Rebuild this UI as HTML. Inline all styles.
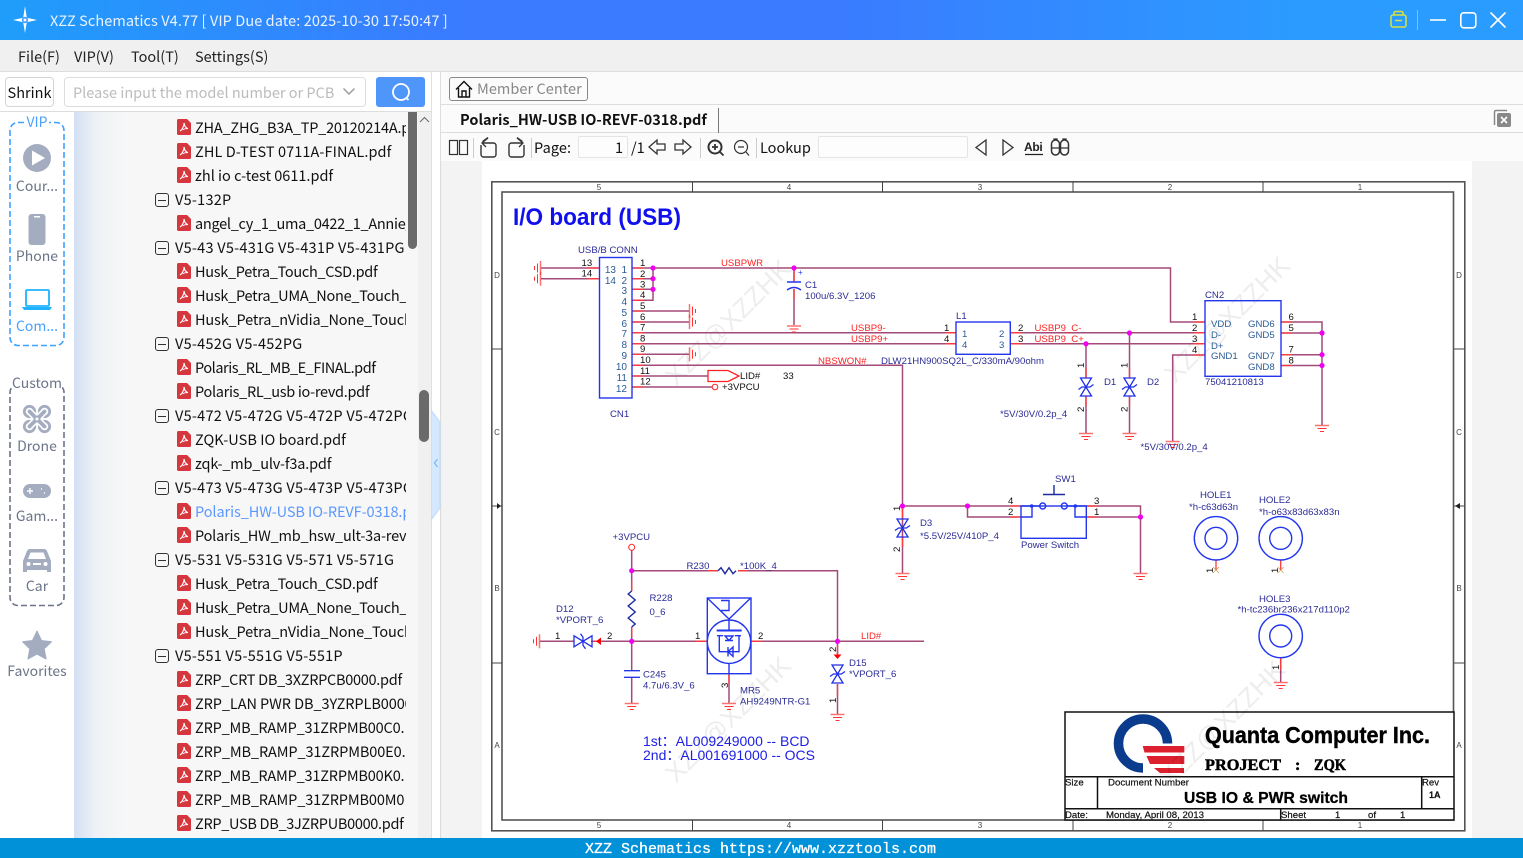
<!DOCTYPE html>
<html><head><meta charset="utf-8"><title>XZZ Schematics</title>
<style>
*{box-sizing:border-box}
html,body{margin:0;padding:0;width:1523px;height:858px;overflow:hidden;background:#f0f0f0;font-family:"Noto Sans CJK SC","Liberation Sans",sans-serif;color:#111}
.a{position:absolute;white-space:nowrap}
#title{left:0;top:0;width:1523px;height:40px;background:linear-gradient(90deg,#1f9dfb 0,#3a7bff 30%,#3a7bff 55%,#2b9bff 85%,#2b9cff 100%)}
#menu{left:0;top:40px;width:1523px;height:32px;background:#f0f0f0;border-bottom:1px solid #ddd}
.m{top:47px;font-size:14.5px;line-height:20px;color:#222}
#tree{left:74px;top:112px;width:344px;height:726px;background:linear-gradient(90deg,#d3e0f3 0,#eef1f6 22px,#f7f7f7 50px);overflow:hidden}
.r{position:absolute;left:0;width:332px;height:24px;line-height:24px;font-size:14.5px;overflow:hidden;white-space:nowrap;color:#111}
.r span{position:absolute;top:0}
.f span{left:121px}
.g span{left:101px;letter-spacing:.25px}
.f svg{position:absolute;left:103px;top:3px}
.g i{position:absolute;left:81px;top:5px;width:14px;height:14px;border:1px solid #333;border-radius:3px}
.g i:after{content:"";position:absolute;left:2px;top:5.5px;width:8px;height:1px;background:#333}
.s{left:0;width:74px;text-align:center;font-size:14px;line-height:18px;color:#6b7488}
</style></head><body>
<svg width="0" height="0" style="position:absolute"><defs>
<g id="pdf"><path d="M0 1.500a1.500 1.500 0 0 1 1.500-1.500H10l4 4v10.500a1.500 1.500 0 0 1-1.500 1.500h-11A1.500 1.500 0 0 1 0 14.500z" fill="#d6373f"/><path d="M3 12c2-1 3-3 4-6.500-.6-1.500.6-1.500.4 0 .4 2 1.500 3.500 3.600 4-2 0-4 .4-5.400 1.300" fill="none" stroke="#fff" stroke-width="1.100"/></g>
</defs></svg>

<div class="a" id="title"></div>
<svg class="a" style="left:0;top:0" width="60" height="40"><path d="M25 6L26.800 17.800 37 20 26.800 22.200 25 33 23.200 22.200 13 20 23.200 17.800z" fill="#fff"/><circle cx="25" cy="20" r="3.200" fill="#4aa3ff"/><circle cx="25" cy="20" r="1.400" fill="#fff"/></svg>
<div class="a" style="left:50px;top:11px;font-size:14.5px;line-height:20px;letter-spacing:.09px;color:#eaf3ff">XZZ Schematics V4.77 [ VIP Due date: 2025-10-30 17:50:47 ]</div>
<svg class="a" style="left:1380px;top:0" width="143" height="40" fill="none">
<g stroke="#d8e23c" stroke-width="1.500"><rect x="11" y="15" width="15" height="12" rx="2"/><path d="M14 15v-2a1.500 1.500 0 0 1 1.500-1.500h6A1.500 1.500 0 0 1 23 13v2M15 20.500h7"/></g>
<path d="M37.500 10v20" stroke="#7cc0ff"/>
<g stroke="#fff" stroke-width="1.600"><path d="M50 20h16"/><rect x="80.800" y="12.800" width="15" height="15" rx="3"/><path d="M110.500 12.500l15 15M125.500 12.500l-15 15"/></g></svg>

<div class="a" id="menu"></div>
<div class="a m" style="left:18px">File(F)</div><div class="a m" style="left:74px">VIP(V)</div><div class="a m" style="left:131px">Tool(T)</div><div class="a m" style="left:195px">Settings(S)</div>

<div class="a" style="left:0;top:72px;width:431px;height:40px;background:#fff;border-bottom:1px solid #ddd"></div>
<div class="a" style="left:5px;top:77px;width:49px;height:30px;border:1px solid #d5d5d5;border-radius:4px;background:#fff;text-align:center;font-size:14.500px;line-height:29px">Shrink</div>
<div class="a" style="left:64px;top:77px;width:302px;height:30px;border:1px solid #ddd;border-radius:4px;background:#fff;padding-left:8px;font-size:14.500px;line-height:29px;color:#bcbcbc">Please input the model number or PCB</div>
<svg class="a" style="left:342px;top:87px" width="14" height="10" fill="none"><path d="M1.500 1.500L7 7l5.500-5.500" stroke="#999" stroke-width="1.400"/></svg>
<div class="a" style="left:376px;top:77px;width:49px;height:30px;border-radius:3px;background:#4f96fb"></div>
<svg class="a" style="left:389px;top:80px" width="24" height="24" fill="none"><circle cx="12" cy="12" r="8" stroke="#fff" stroke-width="1.800"/><path d="M17.500 18l2 2" stroke="#fff" stroke-width="1.800"/></svg>

<div class="a" style="left:0;top:112px;width:74px;height:726px;background:#fff"></div>
<svg class="a" style="left:0;top:112px" width="74" height="510" fill="none"><rect x="10" y="10.500" width="54" height="223" rx="8" stroke="#3ea2ff" stroke-width="1.600" stroke-dasharray="6 3"/><rect x="10" y="272.500" width="54" height="221" rx="8" stroke="#6b7488" stroke-width="1.600" stroke-dasharray="6 3"/></svg>
<div class="a s" style="top:113px;color:#4a9fff"><span style="background:#fff;padding:0 1px">VIP</span></div>
<div class="a s" style="top:374px"><span style="background:#fff">Custom</span></div>
<div class="a s" style="top:177px">Cour...</div><div class="a s" style="top:247px">Phone</div><div class="a s" style="top:317px;color:#4a9fff">Com...</div>
<div class="a s" style="top:437px">Drone</div><div class="a s" style="top:507px">Gam...</div><div class="a s" style="top:577px">Car</div><div class="a s" style="top:662px">Favorites</div>
<svg class="a" style="left:0;top:112px" width="74" height="560">
<circle cx="37" cy="46" r="14" fill="#a4adc0"/><path d="M32 38.500l13 7.500-13 7.500z" fill="#fff"/>
<rect x="28.500" y="102" width="17" height="31" rx="3" fill="#a4adc0"/><rect x="34" y="104" width="6" height="1.500" fill="#fff"/>
<g fill="none" stroke="#1fb2ff" stroke-width="1.800"><rect x="26" y="178" width="23" height="16" rx="1"/></g><path d="M22 195h30l-2 3H24z" fill="#1fb2ff"/>
<g fill="none"><g stroke="#a4adc0" stroke-width="2.800"><circle cx="29.500" cy="299.500" r="5.200"/><circle cx="44.500" cy="299.500" r="5.200"/><circle cx="29.500" cy="314.500" r="5.200"/><circle cx="44.500" cy="314.500" r="5.200"/></g><path d="M29.500 299.500l15 15M44.500 299.500l-15 15" stroke="#fff" stroke-width="7"/><path d="M29.500 299.500l15 15M44.500 299.500l-15 15" stroke="#a4adc0" stroke-width="3.800" stroke-linecap="round"/></g><circle cx="37" cy="307" r="3.500" fill="#a4adc0"/><circle cx="37" cy="307" r="1.500" fill="#fff"/>
<rect x="23" y="372" width="28" height="14" rx="7" fill="#a4adc0"/><path d="M27 379h6M30 376v6M41 377h1M44 381h1" stroke="#fff" stroke-width="1.400"/>
<path d="M23 449l4-10q1-2 3-2h14q2 0 3 2l4 10v11h-4v-2H27v2h-4z" fill="#a4adc0"/><path d="M28 447l2.500-6.500h13L46 447z" fill="#fff"/><circle cx="28.500" cy="452" r="2" fill="#fff"/><circle cx="45.500" cy="452" r="2" fill="#fff"/><rect x="33" y="451" width="8" height="2" fill="#fff"/>
<path d="M37 519l4.500 9.500 10 1.300-7.300 7 1.900 10.200-9.100-5-9.100 5 1.900-10.200-7.300-7 10-1.300z" fill="#a4adc0" stroke="#a4adc0" stroke-linejoin="round"/>
</svg>

<div class="a" id="tree">
<div class="r f" style="top:4px"><svg width="14" height="16"><use href="#pdf"/></svg><span style="letter-spacing:-.2px">ZHA_ZHG_B3A_TP_20120214A.pdf</span></div>
<div class="r f" style="top:28px"><svg width="14" height="16"><use href="#pdf"/></svg><span style="letter-spacing:.08px">ZHL D-TEST 0711A-FINAL.pdf</span></div>
<div class="r f" style="top:52px"><svg width="14" height="16"><use href="#pdf"/></svg><span>zhl io c-test 0611.pdf</span></div>
<div class="r g" style="top:76px"><i></i><span>V5-132P</span></div>
<div class="r f" style="top:100px"><svg width="14" height="16"><use href="#pdf"/></svg><span style="letter-spacing:-.28px">angel_cy_1_uma_0422_1_Annie_</span></div>
<div class="r g" style="top:124px"><i></i><span>V5-43 V5-431G V5-431P V5-431PG</span></div>
<div class="r f" style="top:148px"><svg width="14" height="16"><use href="#pdf"/></svg><span style="letter-spacing:-.3px">Husk_Petra_Touch_CSD.pdf</span></div>
<div class="r f" style="top:172px"><svg width="14" height="16"><use href="#pdf"/></svg><span style="letter-spacing:-.25px">Husk_Petra_UMA_None_Touch_</span></div>
<div class="r f" style="top:196px"><svg width="14" height="16"><use href="#pdf"/></svg><span style="letter-spacing:-.15px">Husk_Petra_nVidia_None_Touch</span></div>
<div class="r g" style="top:220px"><i></i><span>V5-452G V5-452PG</span></div>
<div class="r f" style="top:244px"><svg width="14" height="16"><use href="#pdf"/></svg><span style="letter-spacing:-.45px">Polaris_RL_MB_E_FINAL.pdf</span></div>
<div class="r f" style="top:268px"><svg width="14" height="16"><use href="#pdf"/></svg><span style="letter-spacing:-.3px">Polaris_RL_usb io-revd.pdf</span></div>
<div class="r g" style="top:292px"><i></i><span>V5-472 V5-472G V5-472P V5-472PG</span></div>
<div class="r f" style="top:316px"><svg width="14" height="16"><use href="#pdf"/></svg><span style="letter-spacing:.05px">ZQK-USB IO board.pdf</span></div>
<div class="r f" style="top:340px"><svg width="14" height="16"><use href="#pdf"/></svg><span style="letter-spacing:-.18px">zqk-_mb_ulv-f3a.pdf</span></div>
<div class="r g" style="top:364px"><i></i><span>V5-473 V5-473G V5-473P V5-473PG</span></div>
<div class="r f" style="top:388px"><svg width="14" height="16"><use href="#pdf"/></svg><span style="color:#5b97ff;letter-spacing:-.08px">Polaris_HW-USB IO-REVF-0318.pdf</span></div>
<div class="r f" style="top:412px"><svg width="14" height="16"><use href="#pdf"/></svg><span style="letter-spacing:-.2px">Polaris_HW_mb_hsw_ult-3a-revd</span></div>
<div class="r g" style="top:436px"><i></i><span>V5-531 V5-531G V5-571 V5-571G</span></div>
<div class="r f" style="top:460px"><svg width="14" height="16"><use href="#pdf"/></svg><span style="letter-spacing:-.3px">Husk_Petra_Touch_CSD.pdf</span></div>
<div class="r f" style="top:484px"><svg width="14" height="16"><use href="#pdf"/></svg><span style="letter-spacing:-.25px">Husk_Petra_UMA_None_Touch_</span></div>
<div class="r f" style="top:508px"><svg width="14" height="16"><use href="#pdf"/></svg><span style="letter-spacing:-.15px">Husk_Petra_nVidia_None_Touch</span></div>
<div class="r g" style="top:532px"><i></i><span>V5-551 V5-551G V5-551P</span></div>
<div class="r f" style="top:556px"><svg width="14" height="16"><use href="#pdf"/></svg><span style="letter-spacing:-.28px">ZRP_CRT DB_3XZRPCB0000.pdf</span></div>
<div class="r f" style="top:580px"><svg width="14" height="16"><use href="#pdf"/></svg><span style="letter-spacing:-.08px">ZRP_LAN PWR DB_3YZRPLB0000</span></div>
<div class="r f" style="top:604px"><svg width="14" height="16"><use href="#pdf"/></svg><span style="letter-spacing:-.18px">ZRP_MB_RAMP_31ZRPMB00C0.</span></div>
<div class="r f" style="top:628px"><svg width="14" height="16"><use href="#pdf"/></svg><span style="letter-spacing:-.1px">ZRP_MB_RAMP_31ZRPMB00E0.</span></div>
<div class="r f" style="top:652px"><svg width="14" height="16"><use href="#pdf"/></svg><span style="letter-spacing:-.18px">ZRP_MB_RAMP_31ZRPMB00K0.</span></div>
<div class="r f" style="top:676px"><svg width="14" height="16"><use href="#pdf"/></svg><span style="letter-spacing:-.12px">ZRP_MB_RAMP_31ZRPMB00M0</span></div>
<div class="r f" style="top:700px"><svg width="14" height="16"><use href="#pdf"/></svg><span style="letter-spacing:-.3px">ZRP_USB DB_3JZRPUB0000.pdf</span></div>
</div>
<div class="a" style="left:408px;top:112px;width:9px;height:137px;background:#6a6a6a;border-radius:0 0 5px 5px"></div>
<div class="a" style="left:418px;top:112px;width:13px;height:726px;background:#f0f0f0"></div>
<div class="a" style="left:431px;top:72px;width:10px;height:766px;background:#fff;border-left:1px solid #e0e0e0;border-right:1px solid #ddd"></div>
<svg class="a" style="left:419px;top:116px" width="11" height="8" fill="none"><path d="M1 6l4.500-4.500L10 6" stroke="#666"/></svg>
<div class="a" style="left:419px;top:390px;width:10px;height:52px;background:#6a6a6a;border-radius:5px"></div>
<svg class="a" style="left:431px;top:405px" width="10" height="120"><path d="M0 5l9 12v86l-9 12z" fill="#d4e8ff" stroke="#bcd9fb"/><path d="M6.500 54l-3 4 3 4" stroke="#6aa8f5" fill="none"/></svg>

<div class="a" style="left:441px;top:72px;width:1082px;height:33px;background:#fbfbfb;border-bottom:1px solid #ddd"></div>
<div class="a" style="left:449px;top:77px;width:139px;height:24px;border:1px solid #888;border-radius:3px"></div>
<svg class="a" style="left:454px;top:79px" width="20" height="20" fill="none" stroke="#111" stroke-width="1.400"><path d="M2 10.500L10 2.500l8 8M4.500 9v9h11V9M8 18v-6h4v6"/></svg>
<div class="a" style="left:477px;top:79px;font-size:14.500px;line-height:20px;letter-spacing:.05px;color:#888">Member Center</div>
<div class="a" style="left:441px;top:105px;width:1082px;height:28px;background:#fbfbfb;border-bottom:1px solid #ddd"></div>
<div class="a" style="left:460px;top:109px;font-size:14.500px;line-height:21px;font-weight:700;letter-spacing:.03px;color:#111">Polaris_HW-USB IO-REVF-0318.pdf</div>
<div class="a" style="left:718px;top:108px;width:1px;height:25px;background:#777"></div>
<svg class="a" style="left:1493px;top:109px" width="20" height="20"><path d="M1.500 16V3A1.500 1.500 0 0 1 3 1.500h11" fill="none" stroke="#888" stroke-width="1.500"/><rect x="4" y="4" width="14" height="14" rx="2" fill="#888"/><path d="M8 8l6 6M14 8l-6 6" stroke="#fff" stroke-width="1.600"/></svg>

<div class="a" style="left:441px;top:133px;width:1082px;height:28px;background:#fbfbfb"></div>
<svg class="a" style="left:441px;top:133px" width="640" height="28" fill="none" stroke="#333" stroke-width="1.200">
<rect x="8.500" y="7.500" width="8" height="14"/><rect x="18.500" y="7.500" width="8" height="14"/>
<path d="M32.500 5v20M90.500 5v20M259.500 5v20M315.500 5v20" stroke="#ccc" stroke-width="1"/>
<path d="M40 12v9.500a2.500 2.500 0 0 0 2.500 2.500h10a2.500 2.500 0 0 0 2.500-2.500V12.500a2.500 2.500 0 0 0-2.500-2.500H42" stroke-width="1.400"/><path d="M47 5l-6 5 4 4M41.500 8.500L47 4.500" stroke-width="1.300"/>
<path d="M83 12v9.500a2.500 2.500 0 0 1-2.500 2.500h-10a2.500 2.500 0 0 1-2.500-2.500V12.500a2.500 2.500 0 0 1 2.500-2.500H81" stroke-width="1.400"/><path d="M76 5l6 5-4 4M81.500 8.500L76 4.500" stroke-width="1.300"/>
<path d="M208 14l8-7v4h8v6h-8v4zM250 14l-8-7v4h-8v6h8v4z" stroke-width="1.300"/>
<circle cx="274" cy="14" r="6.500" stroke-width="2"/><path d="M279 19l3.500 3.500M271 14h6M274 11v6" stroke-width="1.800"/>
<circle cx="300" cy="14" r="6.500"/><path d="M305 19l3 3.500M297 14h6"/>
<path d="M545 7l-10 7.500 10 7.500zM562 7l10 7.500-10 7.500z" stroke-width="1.300"/>
<path d="M584 21.500h18" stroke="#222"/>
<rect x="610.500" y="7" width="8" height="15" rx="4" stroke-width="1.500"/><rect x="619.500" y="7" width="8" height="15" rx="4" stroke-width="1.500"/><path d="M610 15h18M613 7V6h3v1M622 7V6h3v1" stroke-width="1.300"/>
</svg>
<div class="a" style="left:534px;top:138px;font-size:14.500px;line-height:20px;letter-spacing:.1px">Page:</div>
<div class="a" style="left:578px;top:136px;width:50px;height:22px;border:1px solid #e4e4e4;border-radius:2px;background:#fdfdfd;text-align:right;padding-right:4px;font-size:14.500px;line-height:22px">1</div>
<div class="a" style="left:631px;top:138px;font-size:14.500px;line-height:20px">/1</div>
<div class="a" style="left:760px;top:138px;font-size:14.500px;line-height:20px">Lookup</div>
<div class="a" style="left:818px;top:136px;width:150px;height:22px;border:1px solid #e4e4e4;border-radius:2px;background:#fdfdfd"></div>
<div class="a" style="left:1024px;top:140px;font:700 12px/14px 'Liberation Sans',sans-serif;letter-spacing:-.3px;color:#222">Abi</div>

<div class="a" style="left:442px;top:161px;width:1081px;height:677px;background:#f3f3f3"></div>
<svg class="a" style="left:0;top:0" width="1523" height="858" font-family="'Liberation Sans',sans-serif" font-size="9.600">
<defs>
<g id="gnd" stroke="#f33" fill="none"><path d="M-7 0.500h14" stroke-width="1.500" stroke-opacity=".7"/><path d="M-4.500 3.500h9M-2 6.500h4"/></g>
<g id="tvs" fill="none" stroke="#1f2fe8" stroke-width="1.300"><path d="M-5.500 -9h11L0 0zM-5.500 9h11L0 0z"/><path d="M-7.500 2.500L-4 0H4L7.500 -2.500"/></g>
</defs>
<rect x="482" y="161" width="990" height="677" fill="#fff"/>
<!-- frames -->
<g fill="none" stroke="#555" stroke-width="1.600"><rect x="491.800" y="181.800" width="973" height="649"/><rect x="502" y="192" width="951.500" height="628"/></g>
<path d="M692.500 182v10M882.500 182v10M1073 182v10M1263 182v10M692.500 820v11M882.500 820v11M1073 820v11M1263 820v11M492 349h10M492 506h10M492 663h10M1454 349h11M1454 506h11M1454 663h11" stroke="#444"/>
<path d="M497 503v6l4-3zM1460 503v6l-5-3z" fill="#222"/>
<g fill="#444" font-size="8" text-anchor="middle"><text x="599" y="190">5</text><text x="789" y="190">4</text><text x="980" y="190">3</text><text x="1170" y="190">2</text><text x="1360" y="190">1</text><text x="599" y="828">5</text><text x="789" y="828">4</text><text x="980" y="828">3</text><text x="1170" y="828">2</text><text x="1360" y="828">1</text>
<text x="497" y="278">D</text><text x="497" y="435">C</text><text x="497" y="591">B</text><text x="497" y="748">A</text><text x="1459" y="278">D</text><text x="1459" y="435">C</text><text x="1459" y="591">B</text><text x="1459" y="748">A</text></g>

<!-- watermarks -->
<g fill="#000" fill-opacity=".07" font-size="26">
<text transform="translate(676,387) rotate(-45)" textLength="165" lengthAdjust="spacingAndGlyphs">XZZ@XZZHK</text>
<text transform="translate(1175,384) rotate(-45)" textLength="165" lengthAdjust="spacingAndGlyphs">XZZ@XZZHK</text>
<text transform="translate(676,784) rotate(-45)" textLength="165" lengthAdjust="spacingAndGlyphs">XZZ@XZZHK</text>
</g>

<text x="513" y="225" font-size="24" font-weight="700" fill="#1010ee" textLength="168" lengthAdjust="spacingAndGlyphs">I/O board (USB)</text>

<!-- wires -->
<g fill="none" stroke="#a34a78" stroke-width="1.500">
<path d="M541 268h58M541 278.700h58"/>
<path d="M632 268H1170.500V322H1205"/>
<path d="M653 268V300.300H632M632 278.700h21M632 289.300h21"/>
<path d="M632 311h57M632 322h57M632 354.300h57"/>
<path d="M632 332.800H956M632 343.800H956M1010 332.800H1205M1010 343.800H1205"/>
<path d="M632 365.300H902.500V573"/>
<path d="M632 376h76M632 387h80"/>
<path d="M794 268V282M794 289V325"/>
<path d="M1086 344V378M1086 396V433M1129.500 333V378M1129.500 396V433"/>
<path d="M1205 355H1172.700V441"/>
<path d="M1281 322H1322V425M1281 333H1322M1281 354.700H1322M1281 365.500H1322"/>
<path d="M902 506H1021M967.500 506V517H1021"/>
<path d="M1086 506H1140.500V573M1086 517H1140.500"/>
<path d="M631.700 550V591M631.700 627V670M631.700 678V703"/>
<path d="M631.700 570.700H718M738 570.700H837.500V655M837.500 684V714"/>
<path d="M540 641.300H574M592 641.300H707M751 641.300H924"/>
<path d="M729 674V703"/>
<path d="M1280.700 658V682"/>
</g>
<g fill="none" stroke="#ff3a3a" stroke-width="1.300">
<path d="M632 268h11M632 278.700h11M632 289.300h11M632 300.300h11M632 311h11M632 322h11M632 332.800h11M632 343.800h11M632 354.300h11M632 365.300h11M632 376h11M632 387h11M588 268h11M588 278.700h11"/>
<path d="M945 332.800h11M945 343.800h11M1010 332.800h11M1010 343.800h11M1194 322h11M1194 332.800h11M1194 343.800h11M1194 355h11M1281 322h11M1281 333h11M1281 354.700h11M1281 365.500h11"/>
<path d="M1086 368v10M1086 396v10M1129.500 368v10M1129.500 396v10M1010 506h11M1010 517h11M1086 506h11M1086 517h11M902.500 508v10M902.500 537v10"/>
<path d="M707 641.300h-11M751 641.300h11M707 376h1M1216 560v10M1280.700 560v10M1280.700 658v12M837.500 645v10M837.500 684v12M591 641.300h11M729 674v10M708 570.700h10M738 570.700h10M631.700 581v10M631.700 627v10M794 270v12M794 289v10"/>
</g>
<!-- arrows/ports -->
<path d="M708 370.500h20l11 5.500-11 5.500h-20z" fill="none" stroke="#f22" stroke-width="1.300"/>
<circle cx="715" cy="387" r="2.800" fill="#fff" stroke="#f22"/>
<circle cx="631.700" cy="547.300" r="3" fill="#fff" stroke="#f22"/>
<path d="M601 637.500v7.500l-5-3.700zM833.500 654.500h8l-4 4.500z" fill="#f00"/>
<!-- grounds -->
<use href="#gnd" x="794" y="325.500"/><use href="#gnd" x="1086" y="433"/><use href="#gnd" x="1129.500" y="433"/>
<use href="#gnd" x="1172.700" y="441"/><use href="#gnd" x="1322" y="425"/><use href="#gnd" x="902.500" y="573"/><use href="#gnd" x="1140.500" y="573"/>
<use href="#gnd" x="631.700" y="703"/><use href="#gnd" x="729" y="703"/><use href="#gnd" x="837.500" y="714"/><use href="#gnd" x="1280.700" y="682"/>
<use href="#gnd" transform="translate(541,268) rotate(90)"/><use href="#gnd" transform="translate(541,278.700) rotate(90)"/>
<use href="#gnd" transform="translate(689,311) rotate(-90)"/><use href="#gnd" transform="translate(689,322) rotate(-90)"/><use href="#gnd" transform="translate(689,354.300) rotate(-90)"/>
<use href="#gnd" transform="translate(540,641.300) rotate(90)"/>

<!-- components -->
<g fill="none" stroke="#2236ee" stroke-width="1.400">
<rect x="599.500" y="257.500" width="32.500" height="140.500"/>
<rect x="956" y="322" width="54.300" height="32.300"/>
<rect x="1205" y="300.700" width="76" height="75.600"/>
<path d="M787 282h14M787 290q7-5 14 0"/>
<path d="M624 670.700h16M624 677.300h16"/>
<rect x="1021" y="506" width="65.300" height="32.300"/>
<path d="M1021 506h11V517h-11M1086 506h-11V517h11M1032 506h7M1075 506h-8"/>
<circle cx="1042.700" cy="506" r="3"/><circle cx="1064.300" cy="506" r="3"/>
<path d="M1054 485v9.500M1043 494.500h22" stroke="#1d2aa0"/>
<circle cx="1216" cy="538.300" r="21.700"/><circle cx="1216" cy="538.300" r="11"/>
<circle cx="1280.700" cy="538.300" r="21.700"/><circle cx="1280.700" cy="538.300" r="11"/>
<circle cx="1280.700" cy="636" r="21.700"/><circle cx="1280.700" cy="636" r="11"/>
<rect x="707.300" y="598" width="43.700" height="75.700"/>
<circle cx="729" cy="641.700" r="21.700"/>
<path d="M707.300 598L729 619l21.700-21M729 619v11.500M721 600.500h8v10h-8"/>
<path d="M716.700 630.500h25" stroke-width="2"/>
<path d="M717 635.700h6M735 635.700h6M719.300 635.700v16H739v-16M725 636h8l-4 4.500zM725 640.500h8M729 651.700h-4M733 647l-5 4.700 5 4.700zM728 647v9.500M729 663v11"/>
</g>
<circle cx="1031.700" cy="506" r="1.800" fill="#2236ee"/><circle cx="1075.300" cy="506" r="1.800" fill="#2236ee"/>
<g fill="none" stroke="#2236ee" stroke-width="1.400"><path d="M718 570.700l3-3 4 6 4-6 4 6 3-3" stroke="#1d2aa0"/><path d="M631.700 591l-3.500 3 7 6-7 6 7 6-7 6 7 6-3.500 3" stroke="#1d2aa0"/></g>
<use href="#tvs" x="1086" y="387"/><use href="#tvs" x="1129.500" y="387"/><use href="#tvs" x="902.500" y="528"/><use href="#tvs" x="837.500" y="674"/>
<use href="#tvs" transform="translate(583,641.300) rotate(90)"/>
<g fill="none" stroke="#c9903c" stroke-width=".6"><path d="M1213 567l6 6M1219 567l-6 6M1277.700 567l6 6M1283.700 567l-6 6"/></g>
<!-- dots -->
<g fill="#f000f0"><circle cx="653" cy="268" r="2.600"/><circle cx="653" cy="278.700" r="2.600"/><circle cx="653" cy="289.300" r="2.600"/><circle cx="794" cy="268" r="2.600"/><circle cx="1129.500" cy="333" r="2.600"/><circle cx="1086" cy="343.800" r="2.600"/><circle cx="1322" cy="333" r="2.600"/><circle cx="1322" cy="354.700" r="2.600"/><circle cx="1322" cy="365.500" r="2.600"/><circle cx="902.500" cy="506" r="2.600"/><circle cx="967.500" cy="506" r="2.600"/><circle cx="1140.500" cy="517" r="2.600"/><circle cx="631.700" cy="570.700" r="2.600"/><circle cx="631.700" cy="641.300" r="2.600"/><circle cx="837.500" cy="641.300" r="2.600"/></g>

<!-- navy labels -->
<g fill="#2b2b96">
<text x="578" y="253">USB/B CONN</text><text x="610" y="417">CN1</text>
<text x="805" y="288">C1</text><text x="805" y="299">100u/6.3V_1206</text>
<text x="956" y="319">L1</text><text x="881" y="364">DLW21HN900SQ2L_C/330mA/90ohm</text>
<text x="1205" y="298">CN2</text><text x="1205" y="385">75041210813</text>
<text x="1104" y="385">D1</text><text x="1147" y="385">D2</text>
<text x="1000" y="417">*5V/30V/0.2p_4</text><text x="1140.500" y="450">*5V/30V/0.2p_4</text>
<text x="920" y="526">D3</text><text x="920" y="539">*5.5V/25V/410P_4</text>
<text x="1055" y="482">SW1</text><text x="1021" y="548">Power Switch</text>
<text x="1200" y="498">HOLE1</text><text x="1189" y="510">*h-c63d63n</text>
<text x="1259" y="503">HOLE2</text><text x="1259" y="515">*h-o63x83d63x83n</text>
<text x="1259" y="602">HOLE3</text><text x="1237.500" y="612.500">*h-tc236br236x217d110p2</text>
<text x="686.500" y="569">R230</text><text x="740" y="569">*100K_4</text>
<text x="649.500" y="601">R228</text><text x="649.500" y="615">0_6</text>
<text x="556" y="612">D12</text><text x="556" y="623">*VPORT_6</text>
<text x="643" y="677.500">C245</text><text x="643" y="688.500">4.7u/6.3V_6</text>
<text x="740" y="693.500">MR5</text><text x="740" y="704.500">AH9249NTR-G1</text>
<text x="849" y="666">D15</text><text x="849" y="677">*VPORT_6</text>
<text x="612.500" y="540">+3VPCU</text>
</g>
<g fill="#f22">
<text x="721" y="266">USBPWR</text><text x="851" y="331">USBP9-</text><text x="851" y="342">USBP9+</text>
<text x="1034.500" y="331">USBP9_C-</text><text x="1034.500" y="342">USBP9_C+</text>
<text x="818" y="364">NBSWON#</text><text x="861" y="639">LID#</text>
</g>
<text x="798" y="275" fill="#2236ee" font-size="8">+</text>
<!-- pin numbers inside -->
<g fill="#2a5a96" font-size="10" text-anchor="end">
<text x="616" y="273">13</text><text x="616" y="284">14</text>
<text x="627" y="273">1</text><text x="627" y="284">2</text><text x="627" y="294">3</text><text x="627" y="305">4</text><text x="627" y="316">5</text><text x="627" y="327">6</text><text x="627" y="337">7</text><text x="627" y="348">8</text><text x="627" y="359">9</text><text x="627" y="370">10</text><text x="627" y="381">11</text><text x="627" y="392">12</text>
</g>
<g fill="#2a5a96">
<text x="962" y="337">1</text><text x="962" y="348">4</text><text x="999" y="337">2</text><text x="999" y="348">3</text>
<text x="1211" y="327">VDD</text><text x="1211" y="338">D-</text><text x="1211" y="349">D+</text><text x="1211" y="359">GND1</text>
<text x="1248" y="327">GND6</text><text x="1248" y="338">GND5</text><text x="1248" y="359">GND7</text><text x="1248" y="370">GND8</text>
</g>
<!-- black pin numbers -->
<g fill="#111">
<text x="581.500" y="266">13</text><text x="581.500" y="276.500">14</text>
<text x="640" y="266">1</text><text x="640" y="277">2</text><text x="640" y="287.500">3</text><text x="640" y="298">4</text><text x="640" y="309">5</text><text x="640" y="320">6</text><text x="640" y="330.500">7</text><text x="640" y="341.500">8</text><text x="640" y="352">9</text><text x="640" y="363">10</text><text x="640" y="374">11</text><text x="640" y="384.500">12</text>
<text x="740" y="379">LID#</text><text x="722" y="390">+3VPCU</text><text x="783" y="379">33</text>
<text x="944" y="331">1</text><text x="944" y="342">4</text><text x="1018" y="331">2</text><text x="1018" y="342">3</text>
<text x="1192" y="320">1</text><text x="1192" y="331">2</text><text x="1192" y="342">3</text><text x="1192" y="353">4</text>
<text x="1288.500" y="320">6</text><text x="1288.500" y="331">5</text><text x="1288.500" y="352.500">7</text><text x="1288.500" y="363.500">8</text>
<text x="1008" y="504">4</text><text x="1008" y="515">2</text><text x="1094" y="504">3</text><text x="1094" y="515">1</text>
<text x="555" y="639">1</text><text x="607" y="639">2</text><text x="695" y="639">1</text><text x="758" y="639">2</text>
<text transform="translate(1084,368) rotate(-90)">1</text><text transform="translate(1127.500,368) rotate(-90)">1</text>
<text transform="translate(1084,412) rotate(-90)">2</text><text transform="translate(1127.500,412) rotate(-90)">2</text>
<text transform="translate(900,552) rotate(-90)">2</text><text transform="translate(900,511) rotate(-90)">1</text>
<text transform="translate(836,652) rotate(-90)">2</text><text transform="translate(836,703) rotate(-90)">1</text>
<text transform="translate(728,688) rotate(-90)">3</text>
<text transform="translate(1213,573) rotate(-90)">1</text><text transform="translate(1278,573) rotate(-90)">1</text><text transform="translate(1279,670) rotate(-90)">1</text>
</g>
<text x="643" y="746" font-size="14" fill="#2020e6">1st：AL009249000 -- BCD</text>
<text x="643" y="760" font-size="14" fill="#2020e6">2nd：AL001691000 -- OCS</text>

<!-- title block -->
<rect x="1065" y="712" width="389" height="108" fill="#fff"/>
<g fill="none" stroke="#111" stroke-width="1.500"><rect x="1065" y="712" width="389" height="108"/><path d="M1065 776.700h389M1065 808.700h389M1097.500 777v32M1421.700 777v32M1280.700 809v11"/></g>
<path d="M1167.500 743.500A24.500 24.500 0 1 0 1143 768" fill="none" stroke="#0b3b8c" stroke-width="9.500"/>
<path d="M1142.700 746H1184.300V752.500H1144.500zM1146.500 756H1184.300V764H1150zM1154 768H1184V773H1160z" fill="#dc2030"/>
<text x="1205" y="743" font-size="23" font-weight="700" textLength="225" lengthAdjust="spacingAndGlyphs" fill="#000" stroke="#000" stroke-width=".4">Quanta Computer Inc.</text>
<g font-size="16" font-weight="700" font-family="'Liberation Serif',serif" fill="#000" stroke="#000" stroke-width=".5"><text x="1205" y="770" textLength="76" lengthAdjust="spacingAndGlyphs">PROJECT</text><text x="1295" y="770">:</text><text x="1314" y="770" textLength="32" lengthAdjust="spacingAndGlyphs">ZQK</text></g>
<g fill="#111" stroke="#111" stroke-width=".2"><text x="1065" y="785.500">Size</text><text x="1108" y="785.500" textLength="81" lengthAdjust="spacingAndGlyphs">Document Number</text><text x="1422" y="785.500">Rev</text>
<text x="1429" y="798" font-weight="700" font-size="9">1A</text>
<text x="1184" y="803" font-size="16" font-weight="700" textLength="164" lengthAdjust="spacingAndGlyphs" fill="#000" stroke="#000" stroke-width=".3">USB IO &amp; PWR switch</text>
<text x="1065" y="818">Date:</text><text x="1106" y="818" textLength="98" lengthAdjust="spacingAndGlyphs">Monday, April 08, 2013</text>
<text x="1281" y="818">Sheet</text><text x="1335" y="818">1</text><text x="1368" y="818">of</text><text x="1400" y="818">1</text></g>
<text transform="translate(1170,788) rotate(-45)" fill="#000" fill-opacity=".07" font-size="26" textLength="165" lengthAdjust="spacingAndGlyphs">XZZ@XZZHK</text>
</svg>

<div class="a" style="left:0;top:838px;width:1523px;height:20px;background:#0091d9"></div>
<div class="a" style="left:585px;top:841px;font:15px/17px 'Liberation Mono',monospace;-webkit-text-stroke:.3px #fff;color:#fff">XZZ Schematics https://www.xzztools.com</div>
</body></html>
